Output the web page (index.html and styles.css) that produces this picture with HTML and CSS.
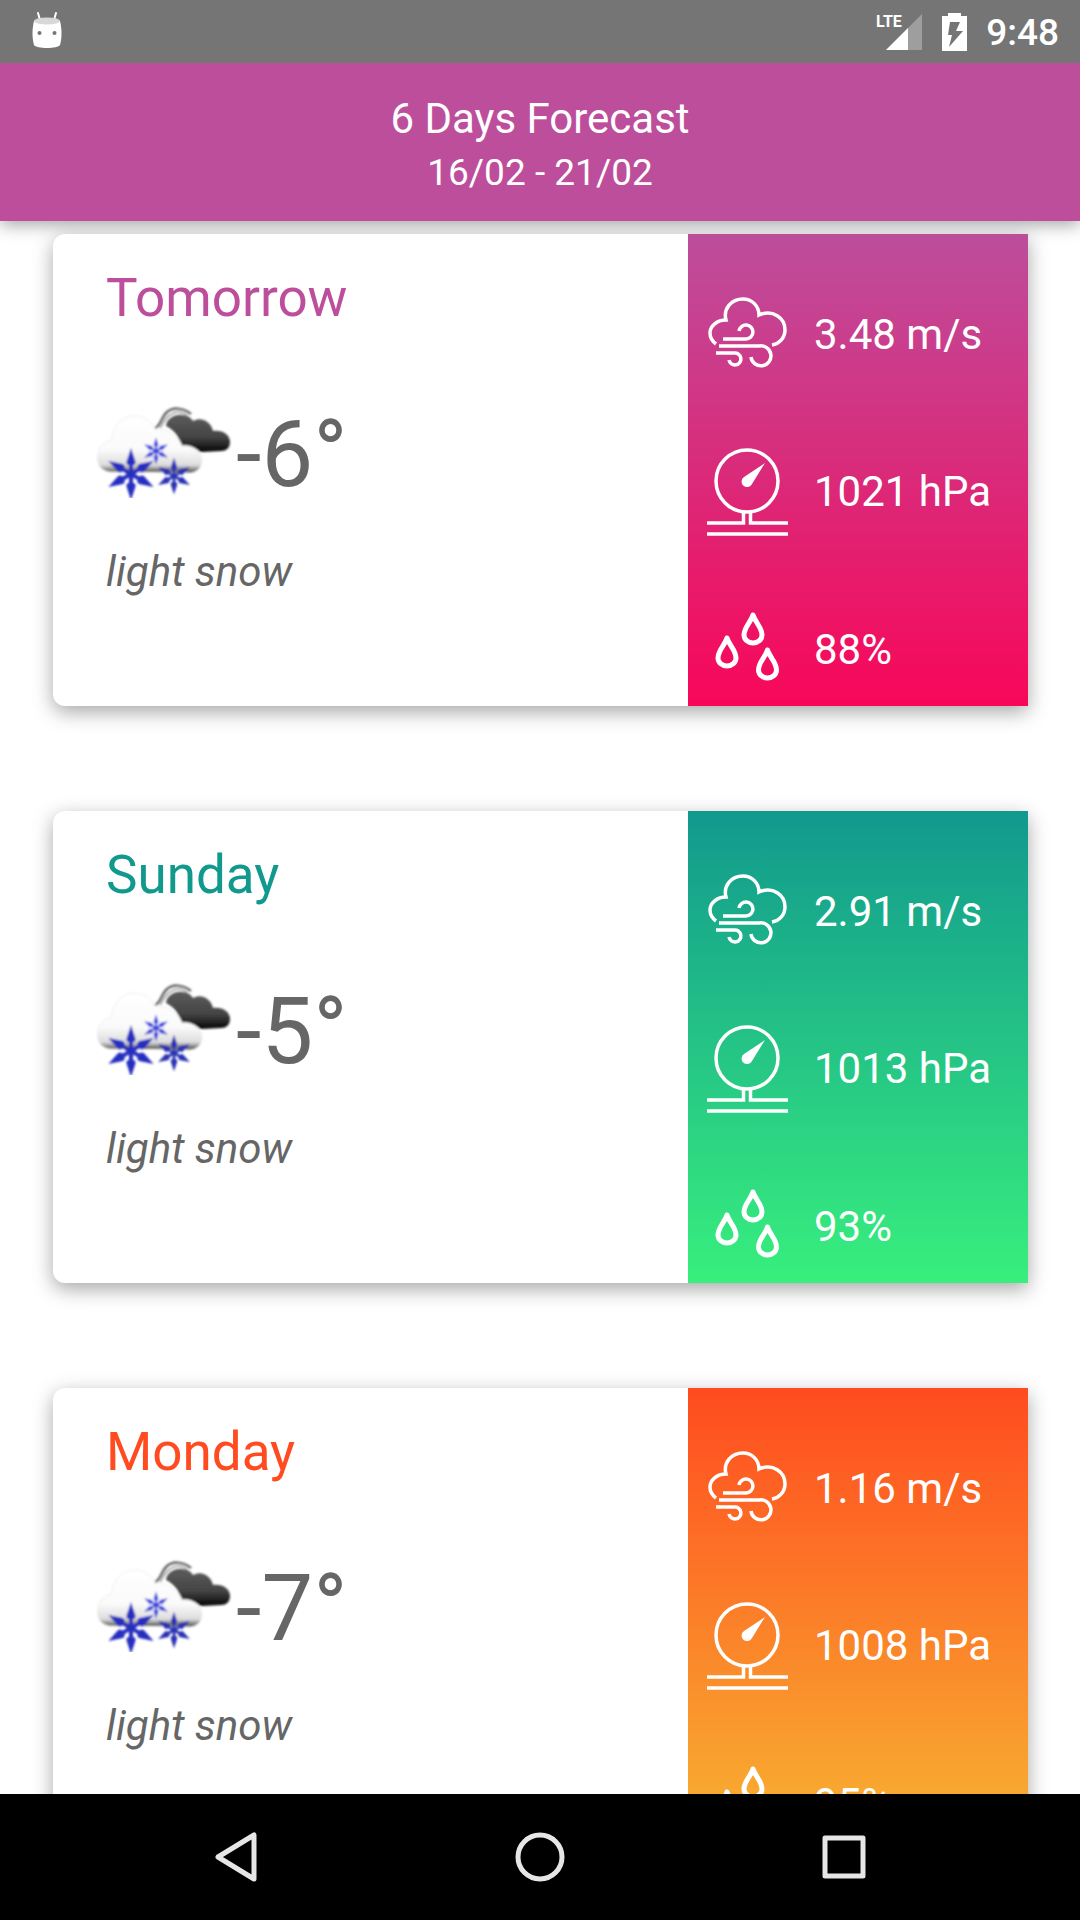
FILE: index.html
```html
<!DOCTYPE html>
<html lang="en">
<head>
<meta charset="utf-8">
<meta name="viewport" content="width=device-width, initial-scale=1">
<title>6 Days Forecast</title>
<link rel="stylesheet" href="styles.css">
</head>
<body>
<svg class="sprite" aria-hidden="true">
  <defs>
    <linearGradient id="white-cloud" x1="0" y1="0" x2="0" y2="1">
      <stop offset="0" stop-color="#fff"/><stop offset=".6" stop-color="#fafafa"/>
      <stop offset=".86" stop-color="#ddd"/><stop offset=".94" stop-color="#888"/><stop offset="1" stop-color="#333"/>
    </linearGradient>
    <linearGradient id="dark-cloud" x1="0" y1="0" x2="0" y2="1">
      <stop offset="0" stop-color="#5c5c5c"/><stop offset=".6" stop-color="#444"/><stop offset="1" stop-color="#050505"/>
    </linearGradient>
    <filter id="soft" x="-10%" y="-10%" width="120%" height="120%"><feGaussianBlur stdDeviation="1"/></filter>
    <g id="flake" fill="none" stroke-linecap="round">
      <g id="arm"><path d="M0 0V-14" stroke-width="4"/><path d="M-1-12L0-15L1-12" stroke-width="7"/></g>
      <use href="#arm" transform="rotate(60)"/><use href="#arm" transform="rotate(120)"/>
      <use href="#arm" transform="rotate(180)"/><use href="#arm" transform="rotate(240)"/><use href="#arm" transform="rotate(300)"/>
    </g>
  </defs>
  <symbol id="snow" viewBox="0 -5 141 105">
    <g filter="url(#soft)">
      <path d="M59 21C66 18 66 10 71 5C77-1 87-1 96 6" fill="none" stroke="#666" stroke-width="2.500"/>
      <path d="M65 20C69 14 70 10 75 7C80 3 86 3 92 7" fill="none" stroke="#999" stroke-width="1.500"/>
      <path d="M71 18C72 10 80 6 87 7C93 7 96 10 98 13C107 8 116 14 118 23C128 22 135 27 135 34C135 40 131 43 126 43L105 44C98 38 92 38 86 38C84 28 79 22 71 18Z" fill="url(#dark-cloud)"/>
      <path d="M14 64C4 62 1 54 3 46C4 38 10 33 17 32C17 18 27 8 40 8C50 8 57 14 60 21C72 20 84 28 87 38C97 36 107 44 107 52C107 60 102 64 96 65Z" fill="url(#white-cloud)" stroke="#eee" stroke-width="1"/>
      <use href="#flake" stroke="#262fc0" transform="translate(36 66)"/>
      <use href="#flake" stroke="#3a44dd" transform="translate(61 43) scale(.52)"/>
      <use href="#flake" stroke="#2a33b4" transform="translate(79 68) scale(.7)"/>
    </g>
  </symbol>
  <symbol id="wind" viewBox="0 0 84 88">
    <g fill="none" stroke="#fff" stroke-width="3.500">
      <path d="M11 53C7 50 5 46 5 42A16 13 0 0 1 21 29C18 18 26 8 38 8C47 8 54 15 54 24C68 18 80 27 80 39C80 47 74 53 67 54"/>
      <path d="M18 48H41A7 7 0 1 0 34 40"/>
      <path d="M14 55H54A10 10 0 1 1 46 66"/>
      <path d="M11 62H29A6 6 0 1 1 24 69"/>
    </g>
  </symbol>
  <symbol id="pressure" viewBox="0 0 84 88">
    <g fill="none" stroke="#fff" stroke-width="3.500">
      <circle cx="42" cy="33" r="31"/>
      <path d="M2 75H38.500V65M45.500 65V75H83M2 86H83"/>
    </g>
    <path d="M60 15L47 36A5.500 5.500 0 1 1 39 29Z" fill="#fff"/>
  </symbol>
  <symbol id="humidity" viewBox="0 0 84 88">
    <g fill="none" stroke="#fff" stroke-width="5" stroke-linejoin="round">
      <path id="drop" d="M48 9C46 16 39 21 39 29A9 8 0 0 0 57 29C57 21 50 16 48 9Z"/>
      <use href="#drop" x="-26" y="23"/><use href="#drop" x="14.500" y="35"/>
    </g>
  </symbol>
</svg>

<div class="status">
  <svg class="droid" viewBox="0 0 32 38" role="img" aria-label="Notification">
    <path d="M7 2l2 7M25 2l-2 7" stroke="#fff" stroke-width="2" stroke-linecap="round"/>
    <path d="M3 10C1 18 1 27 3 34C5 38 27 38 29 34C31 27 31 18 29 10Z" fill="#fff"/>
    <ellipse cx="16" cy="10" rx="13" ry="3.500" fill="#d8d8d8"/>
    <circle cx="8.500" cy="22" r="2" fill="#757575"/><circle cx="23.500" cy="22" r="2" fill="#757575"/>
  </svg>
  <div class="status-right">
    <svg class="signal" viewBox="0 0 46 38" role="img" aria-label="LTE signal">
      <path d="M45 1V37H9Z" fill="#9e9e9e"/><path d="M31 15V37H9Z" fill="#fff"/>
      <text class="lte" x="-1" y="14">LTE</text>
    </svg>
    <svg class="battery" viewBox="0 0 25 38" role="img" aria-label="Battery charging">
      <path d="M6 0H19V3H25V38H0V3H6Z" fill="#fff"/><path d="M8 9H18L14 18H21L7 34L10 22H6Z" fill="#757575"/>
    </svg>
    <time class="clock">9:48</time>
  </div>
</div>

<header class="header">
  <h1 class="title">6 Days Forecast</h1>
  <p class="range">16/02 - 21/02</p>
</header>

<main class="days">
  <article class="card plum">
    <div class="summary">
      <h2 class="day">Tomorrow</h2>
      <div class="temp"><svg class="sky" aria-hidden="true"><use href="#snow"/></svg><span>-6°</span></div>
      <p class="desc">light snow</p>
    </div>
    <ul class="stats">
      <li class="stat"><svg class="icon" aria-hidden="true"><use href="#wind"/></svg>3.48 m/s</li>
      <li class="stat"><svg class="icon" aria-hidden="true"><use href="#pressure"/></svg>1021 hPa</li>
      <li class="stat"><svg class="icon" aria-hidden="true"><use href="#humidity"/></svg>88%</li>
    </ul>
  </article>
  <article class="card green">
    <div class="summary">
      <h2 class="day">Sunday</h2>
      <div class="temp"><svg class="sky" aria-hidden="true"><use href="#snow"/></svg><span>-5°</span></div>
      <p class="desc">light snow</p>
    </div>
    <ul class="stats">
      <li class="stat"><svg class="icon" aria-hidden="true"><use href="#wind"/></svg>2.91 m/s</li>
      <li class="stat"><svg class="icon" aria-hidden="true"><use href="#pressure"/></svg>1013 hPa</li>
      <li class="stat"><svg class="icon" aria-hidden="true"><use href="#humidity"/></svg>93%</li>
    </ul>
  </article>
  <article class="card orange">
    <div class="summary">
      <h2 class="day">Monday</h2>
      <div class="temp"><svg class="sky" aria-hidden="true"><use href="#snow"/></svg><span>-7°</span></div>
      <p class="desc">light snow</p>
    </div>
    <ul class="stats">
      <li class="stat"><svg class="icon" aria-hidden="true"><use href="#wind"/></svg>1.16 m/s</li>
      <li class="stat"><svg class="icon" aria-hidden="true"><use href="#pressure"/></svg>1008 hPa</li>
      <li class="stat"><svg class="icon" aria-hidden="true"><use href="#humidity"/></svg>95%</li>
    </ul>
  </article>
</main>

<nav class="nav">
  <button class="key" type="button" aria-label="Back"><svg class="glyph" viewBox="0 0 52 52"><path d="M44 4V48L8 26Z"/></svg></button>
  <button class="key" type="button" aria-label="Home"><svg class="glyph" viewBox="0 0 52 52"><circle cx="26" cy="26" r="22"/></svg></button>
  <button class="key" type="button" aria-label="Recent apps"><svg class="glyph" viewBox="0 0 52 52"><rect x="7" y="7" width="38" height="38"/></svg></button>
</nav>
</body>
</html>
```
FILE: styles.css
```css
* { box-sizing: border-box; margin: 0; padding: 0; }

body {
  display: flex;
  flex-direction: column;
  height: 100vh;
  background: #fff;
  font-family: Roboto, "Liberation Sans", sans-serif;
  font-size: 42px;
  line-height: 50px;
  color: #fff;
}

svg { display: block; flex: none; }
.sprite { position: absolute; width: 0; height: 0; }

/* Status bar */
.status {
  z-index: 1;
  display: flex;
  flex: none;
  align-items: center;
  justify-content: space-between;
  height: 63px;
  padding: 0 21px 0 31px;
  background: #757575;
}
.droid { width: 32px; height: 38px; margin-bottom: 4px; }
.status-right { display: flex; align-items: center; gap: 19px; }
.signal { width: 46px; height: 38px; overflow: visible; }
.battery { width: 25px; height: 38px; }
.lte { font-size: 16px; font-weight: 700; fill: #fff; }
.clock { padding-top: 2px; font-size: 37px; font-weight: 500; }

/* Header */
.header {
  flex: none;
  padding: 31px 16px 26px;
  background: #bc4e9c;
  box-shadow: 0 4px 16px rgba(0, 0, 0, .35);
  text-align: center;
}
.title { margin-bottom: 7px; font-size: 42px; font-weight: 400; }
.range { font-size: 37px; line-height: 44px; }

/* Forecast list */
.days {
  display: flex;
  flex: 1;
  flex-direction: column;
  gap: 105px;
  min-height: 0;
  padding: 13px 52px 52px 53px;
  overflow-y: auto;
  scrollbar-width: none;
}
.card {
  display: grid;
  flex: none;
  grid-template-columns: 1fr 340px;
  min-height: 472px;
  border-radius: 12px 0 0 12px;
  background: #fff;
  box-shadow: 0 6px 20px rgba(0, 0, 0, .35);
}
.plum { --from: #bc4e9c; --to: #f80759; }
.green { --from: #11998e; --to: #38ef7d; }
.orange { --from: #ff4b1f; --to: #f7b733; }

.summary { padding: 33px 42px; color: #666; }
.day { padding-left: 11px; color: var(--from); font-size: 53px; font-weight: 400; line-height: 62px; }
.temp { display: flex; align-items: center; height: 108px; margin: 72px 0 38px; font-size: 92px; line-height: 108px; }
.sky { width: 141px; height: 105px; }
.desc { padding-left: 11px; font-style: italic; }

.stats {
  display: grid;
  grid-auto-rows: 1fr;
  background: linear-gradient(var(--from), var(--to));
  list-style: none;
}
.stat { display: flex; align-items: center; gap: 25px; padding: 45px 0 0 17px; }
.icon { width: 84px; height: 88px; }

/* Navigation bar */
.nav { display: flex; flex: none; justify-content: center; height: 126px; background: #000; }
.key { display: grid; flex: 0 1 304px; place-items: center; border: 0; background: none; }
.glyph { width: 52px; height: 52px; fill: none; stroke: #e6e6e6; stroke-width: 5; stroke-linejoin: round; }
```
